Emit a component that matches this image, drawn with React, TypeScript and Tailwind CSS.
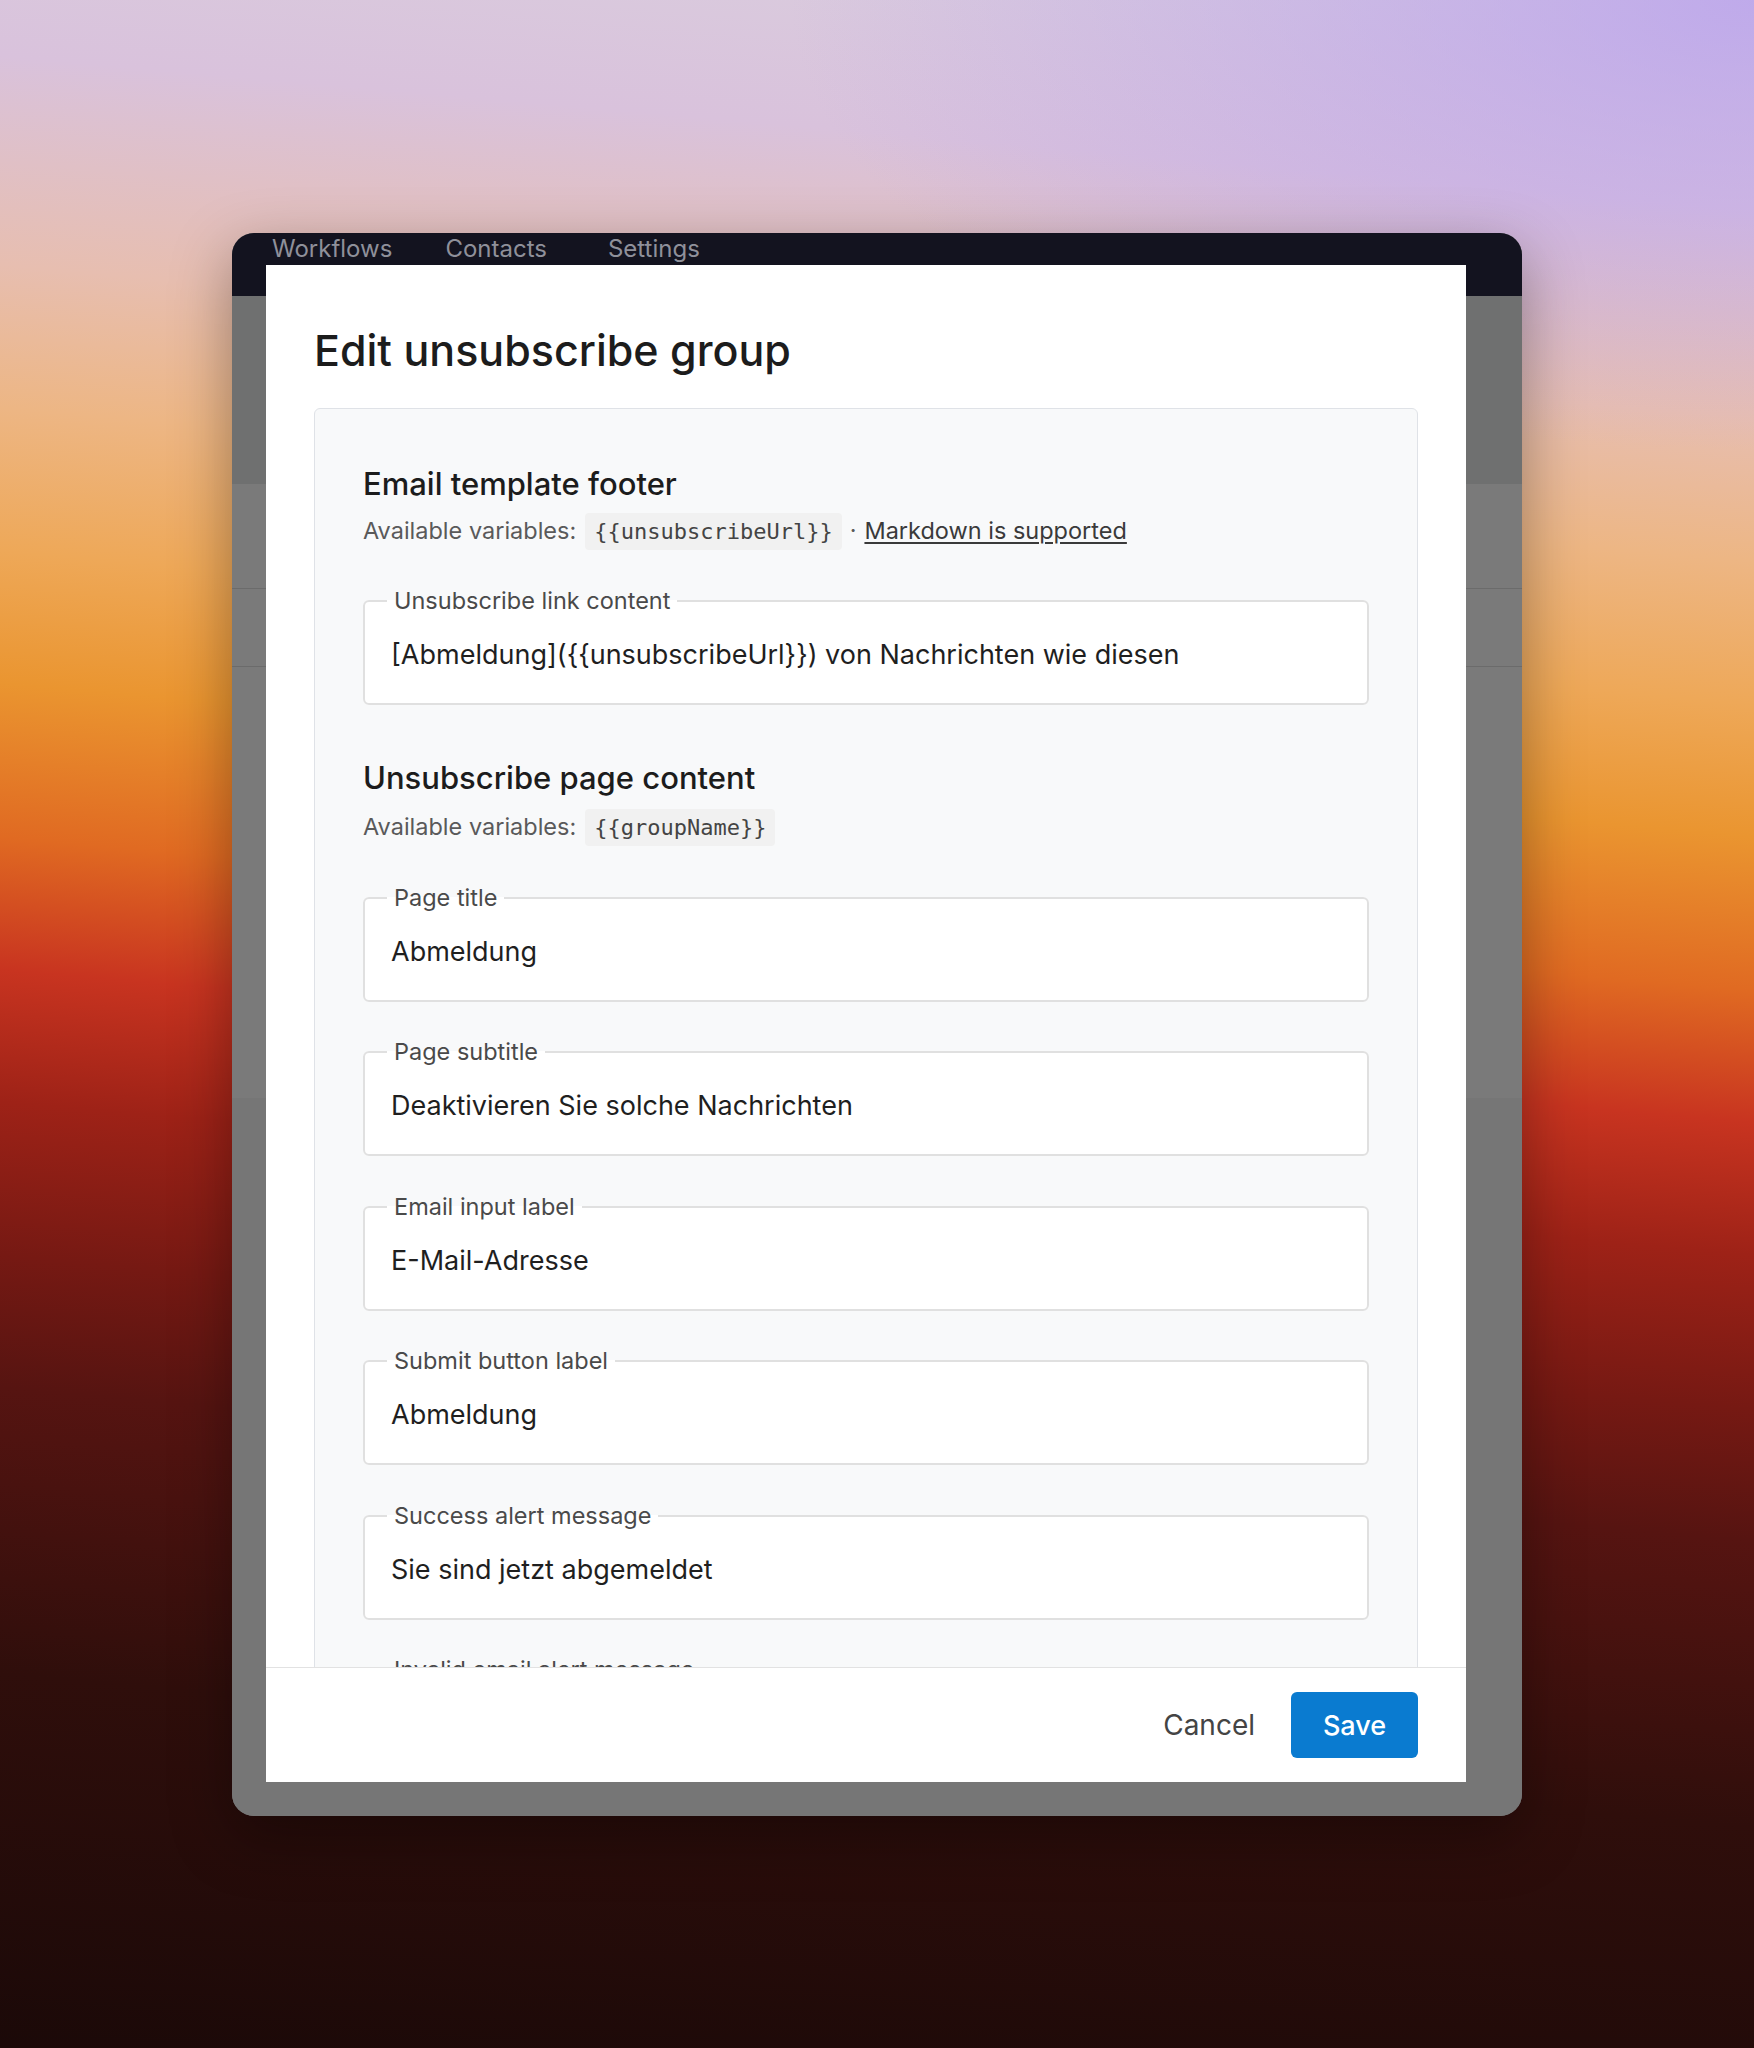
import { useState } from 'react';

interface FieldDef {
  label: string;
  value: string;
}

const pageFields: FieldDef[] = [
  { label: 'Page title', value: 'Abmeldung' },
  { label: 'Page subtitle', value: 'Deaktivieren Sie solche Nachrichten' },
  { label: 'Email input label', value: 'E-Mail-Adresse' },
  { label: 'Submit button label', value: 'Abmeldung' },
  { label: 'Success alert message', value: 'Sie sind jetzt abgemeldet' },
  { label: 'Invalid email alert message', value: 'Ungültige E-Mail-Adresse' },
];

function Field({ label, value }: FieldDef) {
  const [text, setText] = useState(value);
  return (
    <fieldset className="h-[116px] shrink-0 rounded-[6px] border-2 border-[#e0e0e0] bg-white px-[26px]">
      <legend className="-ml-[4px] px-[7px] text-[23.5px] leading-[24px] text-[#4a4a4a]">{label}</legend>
      <input
        value={text}
        onChange={(e) => setText(e.target.value)}
        className="block h-[83px] w-full bg-transparent text-[27px] text-[#1f1f1f] outline-none"
      />
    </fieldset>
  );
}

function Code({ children }: { children: string }) {
  return (
    <code className="flex h-[37px] items-center rounded-[4px] bg-[#f1f1f1] px-[9px] font-['DejaVu_Sans_Mono',monospace] text-[22px] text-[#444]">
      {children}
    </code>
  );
}

export default function App() {
  return (
    <div className="flex h-[2048px] w-full items-center justify-center bg-[radial-gradient(ellipse_55%_22%_at_100%_0%,rgba(180,155,240,0.7),rgba(180,155,240,0)_100%),linear-gradient(185deg,#dacede_0%,#d9c2dc_9.5%,#e7beb0_19%,#edb684_25.5%,#eea858_32%,#ea9530_38%,#e06a22_45%,#c83420_51%,#9e2217_57%,#761913_64%,#561411_70%,#2f0e0b_83%,#1b0908_100%)] font-['Inter',sans-serif]">
      <div className="relative flex h-[1583px] w-[1290px] flex-col overflow-hidden rounded-[22px] bg-[#787878] shadow-[0_20px_60px_rgba(0,0,0,0.35)]">
        <nav className="flex h-[63px] shrink-0 bg-[#13131f] pl-[40px] pt-[2px] text-[24px] leading-[27px] text-[#8f909a]">
          <span>Workflows</span>
          <span className="ml-[53px]">Contacts</span>
          <span className="ml-[61px]">Settings</span>
        </nav>
        <div className="h-[188px] bg-[#6f7070]" />
        <div className="h-[105px] border-b border-[#6b6b6b] bg-[#7a7a7a]" />
        <div className="h-[78px] border-b border-[#6b6b6b] bg-[#7a7a7a]" />
        <div className="h-[431px] bg-[#7a7a7a]" />
        <div className="flex-1 bg-[#767676]" />

        <div className="absolute left-[34px] top-[32px] flex h-[1517px] w-[1200px] flex-col bg-white">
          <div className="flex min-h-0 flex-1 flex-col overflow-hidden px-[48px] pt-[58px]">
            <h1 className="text-[43px] font-medium leading-[54px] text-[#1c1c1c]">Edit unsubscribe group</h1>
            <div className="mt-[31px] flex flex-col rounded-t-[6px] border border-[#dfe2e7] bg-[#f8f9fa] px-[48px] pt-[58px]">
              <h2 className="text-[31px] font-medium leading-[34px] text-[#1c1c1c]">Email template footer</h2>
              <div className="mt-[12px] flex items-center text-[23.5px] text-[#5a5a5a]">
                <span className="mr-[9px]">Available variables:</span>
                <Code>{'{{unsubscribeUrl}}'}</Code>
                <span className="mx-[8px]">·</span>
                <a href="#" className="text-[#3a3a3a] underline underline-offset-[3px]">
                  Markdown is supported
                </a>
              </div>
              <div className="mt-[39px]">
                <Field label="Unsubscribe link content" value="[Abmeldung]({{unsubscribeUrl}}) von Nachrichten wie diesen" />
              </div>

              <h2 className="mt-[56px] text-[31px] font-medium leading-[34px] text-[#1c1c1c]">Unsubscribe page content</h2>
              <div className="mt-[14px] flex items-center text-[23.5px] text-[#5a5a5a]">
                <span className="mr-[9px]">Available variables:</span>
                <Code>{'{{groupName}}'}</Code>
              </div>
              <div className="mt-[40px] flex flex-col gap-[38.5px]">
                {pageFields.map((f) => (
                  <Field key={f.label} label={f.label} value={f.value} />
                ))}
              </div>
            </div>
          </div>
          <div className="flex h-[115px] shrink-0 items-center justify-end gap-[18px] border-t border-[#e2e2e2] px-[48px]">
            <button className="h-[66px] px-[18px] text-[28px] text-[#444]">Cancel</button>
            <button className="h-[66px] w-[127px] rounded-[6px] bg-[#0a7bd0] pt-[3px] text-[27px] font-medium text-white">Save</button>
          </div>
        </div>
      </div>
    </div>
  );
}
